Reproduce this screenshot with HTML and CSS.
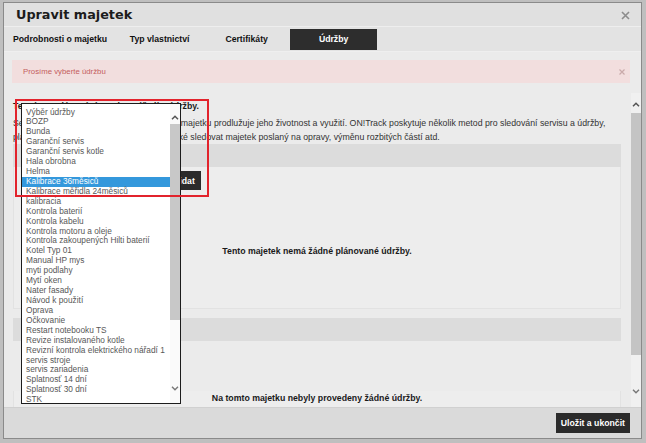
FILE: index.html
```html
<!DOCTYPE html>
<html lang="cs">
<head>
<meta charset="utf-8">
<title>Upravit majetek</title>
<link rel="stylesheet" href="styles.css">
</head>
<body>
<div class="modal">
  <div class="modal-header">
    <h1 class="title">Upravit majetek</h1>
    <span class="close"><svg width="9" height="9" viewBox="0 0 9 9"><path d="M1 1L8 8M8 1L1 8" stroke="#8c8c8c" stroke-width="1.6" fill="none"/></svg></span>
  </div>
  <div class="tabs">
    <div class="tab">Podrobnosti o majetku</div>
    <div class="tab">Typ vlastnictví</div>
    <div class="tab">Certifikáty</div>
    <div class="tab active">Údržby</div>
  </div>
  <div class="alert">
    <span class="alert-text">Prosíme vyberte údržbu</span>
    <span class="alert-close"><svg width="6" height="6" viewBox="0 0 6 6"><path d="M0.5 0.5L5.5 5.5M5.5 0.5L0.5 5.5" stroke="#c9aaaa" stroke-width="1.2" fill="none"/></svg></span>
  </div>
  <div class="scroll">
    <div class="content">
      <h2 class="heading">Termíny a plánování servisu nářadí a údržby.</h2>
      <p class="intro">Servis a pravidelná údržba svého cenného majetku prodlužuje jeho životnost a využití. ON!Track poskytuje několik metod pro sledování servisu a údržby, plánování preventivní údržby, revizí. Lze také sledovat majetek poslaný na opravy, výměnu rozbitých částí atd.</p>
      <div class="panel">
        <div class="panel-head"></div>
        <div class="panel-body first">
          <div class="add-row">
            <div class="select-box"></div>
            <button class="btn add">Přidat</button>
          </div>
          <div class="empty">Tento majetek nemá žádné plánované údržby.</div>
        </div>
      </div>
      <div class="panel second">
        <div class="panel-head"></div>
        <div class="panel-body">
          <div class="empty">Na tomto majetku nebyly provedeny žádné údržby.</div>
        </div>
      </div>
    </div>
    <div class="vscroll">
      <span class="arrow up"><svg width="8" height="5" viewBox="0 0 8 5"><path d="M1 4.2L4 1.2L7 4.2" stroke="#555" stroke-width="1.5" fill="none"/></svg></span>
      <div class="thumb"></div>
      <span class="arrow down"><svg width="8" height="5" viewBox="0 0 8 5"><path d="M1 0.8L4 3.8L7 0.8" stroke="#777" stroke-width="1.4" fill="none"/></svg></span>
    </div>
  </div>
  <div class="modal-footer">
    <button class="btn save">Uložit a ukončit</button>
  </div>

  <div class="listbox">
    <div class="options">
      <div class="opt">Výběr údržby</div>
      <div class="opt">BOZP</div>
      <div class="opt">Bunda</div>
      <div class="opt">Garanční servis</div>
      <div class="opt">Garanční servis kotle</div>
      <div class="opt">Hala obrobna</div>
      <div class="opt">Helma</div>
      <div class="opt selected">Kalibrace 36měsiců</div>
      <div class="opt">Kalibrace měřidla 24měsiců</div>
      <div class="opt">kalibracia</div>
      <div class="opt">Kontrola baterií</div>
      <div class="opt">Kontrola kabelu</div>
      <div class="opt">Kontrola motoru a oleje</div>
      <div class="opt">Kontrola zakoupených Hilti baterií</div>
      <div class="opt">Kotel Typ 01</div>
      <div class="opt">Manual HP mys</div>
      <div class="opt">myti podlahy</div>
      <div class="opt">Mytí oken</div>
      <div class="opt">Nater fasady</div>
      <div class="opt">Návod k použití</div>
      <div class="opt">Oprava</div>
      <div class="opt">Očkovanie</div>
      <div class="opt">Restart notebooku TS</div>
      <div class="opt">Revize instalovaného kotle</div>
      <div class="opt">Revizní kontrola elektrického nářadí 1</div>
      <div class="opt">servis stroje</div>
      <div class="opt">servis zariadenia</div>
      <div class="opt">Splatnosť 14 dní</div>
      <div class="opt">Splatnosť 30 dní</div>
      <div class="opt">STK</div>
    </div>
    <div class="list-scroll">
      <span class="arrow up"><svg width="8" height="5" viewBox="0 0 8 5"><path d="M1 4.2L4 1.2L7 4.2" stroke="#555" stroke-width="1.5" fill="none"/></svg></span>
      <div class="list-thumb"></div>
      <span class="arrow down"><svg width="8" height="5" viewBox="0 0 8 5"><path d="M1 0.8L4 3.8L7 0.8" stroke="#777" stroke-width="1.4" fill="none"/></svg></span>
    </div>
  </div>
  <div class="mark"></div>
</div>
</body>
</html>
```

FILE: styles.css
```css
* { box-sizing: border-box; }
html, body { margin: 0; padding: 0; }
body {
  width: 646px;
  height: 443px;
  overflow: hidden;
  background: #bfbfbf;
  font-family: "Liberation Sans", Arial, sans-serif;
  color: #222;
}
.modal {
  position: relative;
  margin: 2px 0 0 3px;
  width: 639px;
  height: 437px;
  border: 1px solid #8a8a8a;
  background: #ebebeb;
  display: flex;
  flex-direction: column;
}
.modal-header {
  height: 24px;
  flex: none;
  background: #e0e0e0;
  border-bottom: 1px solid #eeeeee;
  display: flex;
  align-items: center;
  justify-content: space-between;
  padding: 0 11px 0 12px;
}
.title {
  margin: 0;
  font-family: "DejaVu Sans", sans-serif;
  font-weight: bold;
  font-size: 12.8px;
  line-height: 23px;
  color: #1c1c1c;
}
.close { display: flex; width: 9px; height: 9px; margin-top: 1px; }
.tabs {
  height: 25px;
  flex: none;
  background: #e3e3e3;
  border-bottom: 1px solid #efefef;
  display: flex;
  padding-top: 2px;
}
.tab {
  height: 21px;
  min-width: 87px;
  padding: 0 9px;
  text-align: center;
  font-size: 8.7px;
  font-weight: bold;
  line-height: 21px;
  color: #111;
  white-space: nowrap;
}
.tab.active { background: #2d2d2d; color: #fff; }
.alert {
  flex: none;
  height: 23px;
  margin: 8px 11px 0 8px;
  background: #f2dede;
  display: flex;
  align-items: center;
  justify-content: space-between;
  padding: 0 5px 0 11px;
}
.alert-text { font-size: 7.8px; color: #c45d5d; }
.alert-close { display: flex; width: 6px; height: 6px; }
.scroll {
  flex: 1;
  min-height: 0;
  margin-top: 10px;
  display: flex;
  overflow: hidden;
}
.content {
  flex: 1;
  min-width: 0;
  padding: 6px 10px 0 9px;
  overflow: hidden;
}
.heading {
  margin: 0 0 3px;
  font-size: 8.75px;
  line-height: 14px;
  font-weight: bold;
  color: #1a1a1a;
}
.intro {
  margin: 0;
  font-size: 8.75px;
  line-height: 14px;
  color: #333;
}
.panel-head { height: 23px; background: #dcdcdc; }
.panel-body {
  background: #ededed;
  border: 1px solid #e2e2e2;
  border-top: none;
}
.panel-body.first { height: 142px; }
.panel.second { margin-top: 9px; }
.panel.second .panel-body { height: 90px; }
.add-row {
  display: flex;
  gap: 6px;
  padding: 4px 0 0 8px;
}
.select-box {
  width: 136px;
  height: 19px;
  background: #fff;
  border: 1px solid #bbb;
}
.btn {
  border: none;
  background: #2b2b2b;
  color: #fff;
  font-family: "Liberation Sans", Arial, sans-serif;
  font-weight: bold;
  font-size: 8.7px;
  padding: 0 5px;
  margin: 0;
}
.btn.add { width: 37px; height: 19px; padding: 0; }
.empty {
  margin-top: 54px;
  text-align: center;
  font-size: 8.75px;
  line-height: 14px;
  font-weight: bold;
  color: #1a1a1a;
}
.panel.second .empty { margin-top: 50px; }
.vscroll {
  flex: none;
  width: 10px;
  background: #f0f0f0;
  display: flex;
  flex-direction: column;
  align-items: center;
  padding-top: 9px;
}
.arrow { display: flex; width: 8px; height: 5px; flex: none; }
.vscroll .thumb {
  width: 10px;
  height: 242px;
  margin-top: 6px;
  background: #c4c4c4;
  flex: none;
}
.vscroll .arrow.down { margin-top: 34px; }
.modal-footer {
  flex: none;
  height: 31px;
  background: #dadada;
  border-top: 1px solid #d0d0d0;
  display: flex;
  align-items: center;
  justify-content: flex-end;
  padding-right: 11px;
}
.btn.save { height: 20px; line-height: 20px; }

/* open select popup */
.listbox {
  position: absolute;
  left: 17px;
  top: 100px;
  width: 160px;
  height: 301px;
  background: #fff;
  border: 1px solid #1c1c1c;
  display: flex;
  overflow: hidden;
}
.options {
  flex: 1;
  padding-top: 3.5px;
  overflow: hidden;
}
.opt {
  height: 9.93px;
  line-height: 9.93px;
  font-size: 8.3px;
  padding-left: 4px;
  color: #575757;
  white-space: nowrap;
}
.opt.selected { background: #3498dc; color: #fff; }
.list-scroll {
  flex: none;
  width: 10px;
  background: #fafafa;
  display: flex;
  flex-direction: column;
  align-items: center;
  padding-top: 11px;
}
.list-thumb {
  width: 10px;
  height: 196px;
  margin-top: 4px;
  background: #c8c8c8;
  flex: none;
}
.list-scroll .arrow.down { margin-top: 66px; }
.mark {
  position: absolute;
  left: 11px;
  top: 96px;
  width: 194px;
  height: 98px;
  border: 2px solid #e2232c;
}
```
